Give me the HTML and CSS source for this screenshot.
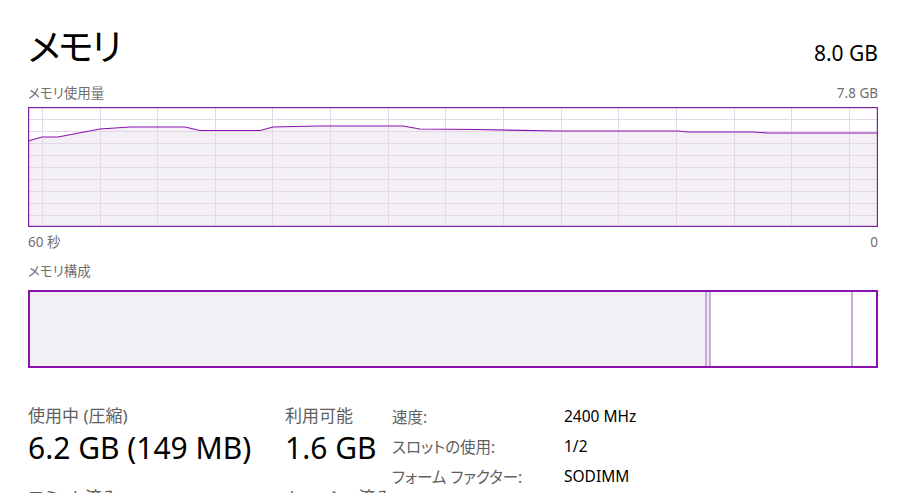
FILE: index.html
```html
<!DOCTYPE html>
<html lang="ja">
<head>
<meta charset="utf-8">
<title>メモリ</title>
<link rel="stylesheet" href="styles.css">
</head>
<body>
<div class="page">
  <div class="header">
    <h1 class="title">メモリ</h1>
    <div class="total">8.0 GB</div>
  </div>
  <div class="caption-row">
    <span>メモリ使用量</span>
    <span>7.8 GB</span>
  </div>
  <div class="graph">
    <svg width="850" height="120" viewBox="0 0 850 120">
      <polygon class="fill" points="0,34 14,30 30,30 72,22 102,20 157,20 172,23.5 232,23.5 245,20 290,19 375,19 392,22 450,22.5 530,24 650,24 660,25 725,25 740,26 850,26 850,120 0,120"/>
      <g class="grid">
        <line x1="0" y1="12.5" x2="850" y2="12.5"/>
        <line x1="0" y1="24.5" x2="850" y2="24.5"/>
        <line x1="0" y1="36.5" x2="850" y2="36.5"/>
        <line x1="0" y1="48.5" x2="850" y2="48.5"/>
        <line x1="0" y1="60.5" x2="850" y2="60.5"/>
        <line x1="0" y1="72.5" x2="850" y2="72.5"/>
        <line x1="0" y1="84.5" x2="850" y2="84.5"/>
        <line x1="0" y1="96.5" x2="850" y2="96.5"/>
        <line x1="0" y1="108.5" x2="850" y2="108.5"/>
        <line x1="14.5" y1="0" x2="14.5" y2="120"/>
        <line x1="72.5" y1="0" x2="72.5" y2="120"/>
        <line x1="129.5" y1="0" x2="129.5" y2="120"/>
        <line x1="187.5" y1="0" x2="187.5" y2="120"/>
        <line x1="244.5" y1="0" x2="244.5" y2="120"/>
        <line x1="302.5" y1="0" x2="302.5" y2="120"/>
        <line x1="360.5" y1="0" x2="360.5" y2="120"/>
        <line x1="417.5" y1="0" x2="417.5" y2="120"/>
        <line x1="475.5" y1="0" x2="475.5" y2="120"/>
        <line x1="533.5" y1="0" x2="533.5" y2="120"/>
        <line x1="590.5" y1="0" x2="590.5" y2="120"/>
        <line x1="648.5" y1="0" x2="648.5" y2="120"/>
        <line x1="706.5" y1="0" x2="706.5" y2="120"/>
        <line x1="763.5" y1="0" x2="763.5" y2="120"/>
        <line x1="821.5" y1="0" x2="821.5" y2="120"/>
      </g>
      <polyline class="line" points="0,34 14,30 30,30 72,22 102,20 157,20 172,23.5 232,23.5 245,20 290,19 375,19 392,22 450,22.5 530,24 650,24 660,25 725,25 740,26 850,26"/>
      <rect class="frame" x="0.5" y="0.5" width="849" height="119"/>
    </svg>
  </div>
  <div class="axis-row">
    <span>60 秒</span>
    <span>0</span>
  </div>
  <div class="caption-row comp-caption">
    <span>メモリ構成</span>
  </div>
  <div class="comp-bar">
    <div class="seg in-use"></div>
    <div class="seg modified"></div>
    <div class="seg standby"></div>
    <div class="seg free"></div>
  </div>
  <div class="stats">
    <div class="stat-col col-used">
      <div class="stat-label">使用中 (圧縮)</div>
      <div class="stat-value">6.2 GB (149 MB)</div>
      <div class="stat-label next">コミット済み</div>
    </div>
    <div class="stat-col col-avail">
      <div class="stat-label">利用可能</div>
      <div class="stat-value">1.6 GB</div>
      <div class="stat-label next">キャッシュ済み</div>
    </div>
    <div class="props">
      <div class="prop-label">速度:</div><div class="prop-value">2400 MHz</div>
      <div class="prop-label">スロットの使用:</div><div class="prop-value">1/2</div>
      <div class="prop-label">フォーム ファクター:</div><div class="prop-value">SODIMM</div>
      <div class="prop-label">ハードウェア予約済み:</div><div class="prop-value">185 MB</div>
    </div>
  </div>
</div>
</body>
</html>
```
FILE: styles.css
```css
html, body {
  margin: 0;
  padding: 0;
  background: #ffffff;
  overflow: hidden;
}
body {
  font-family: "Noto Sans", "Noto Sans CJK JP", sans-serif;
  color: #000000;
  font-feature-settings: "palt";
}
.page {
  width: 850px;
  height: 493px;
  padding: 14px 0 0 28px;
  box-sizing: content-box;
  overflow: hidden;
}
.header {
  display: flex;
  justify-content: space-between;
  align-items: baseline;
  height: 66px;
}
.title {
  margin: 0;
  font-weight: 400;
  font-size: 37px;
  line-height: 66px;
  letter-spacing: -2px;
}
.total {
  font-size: 21px;
  line-height: 66px;
}
.caption-row {
  display: flex;
  justify-content: space-between;
  font-size: 13.5px;
  line-height: 27px;
  height: 27px;
  color: #707070;
}
.graph {
  height: 120px;
  line-height: 0;
}
.graph svg {
  display: block;
}
.graph .fill {
  fill: #f3f0f5;
}
.graph .grid line {
  stroke: #e3d7e9;
  stroke-width: 1;
}
.graph .line {
  fill: none;
  stroke: #8b12ae;
  stroke-width: 1.2;
}
.graph .frame {
  fill: none;
  stroke: #7d1fa0;
  stroke-width: 1.4;
}
.axis-row {
  display: flex;
  justify-content: space-between;
  font-size: 13.5px;
  line-height: 30px;
  height: 30px;
  color: #707070;
}
.comp-caption {
  height: 33px;
  line-height: 28px;
}
.comp-bar {
  display: flex;
  width: 850px;
  height: 78px;
  box-sizing: border-box;
  border: 2px solid #8b12ae;
}
.seg {
  height: 100%;
}
.in-use {
  width: 675px;
  background: #f2f0f4;
}
.modified {
  width: 2px;
  background: #ede6f0;
  border-left: 2px solid #c9acd9;
  border-right: 2px solid #c9acd9;
}
.standby {
  width: 140px;
  background: #ffffff;
  border-right: 2px solid #c9acd9;
}
.free {
  flex: 1;
  background: #ffffff;
}
.stats {
  display: flex;
  margin-top: 36px;
}
.stat-col {
  display: flex;
  flex-direction: column;
}
.col-used {
  width: 257px;
}
.col-avail {
  width: 107px;
}
.stat-label {
  font-size: 17px;
  line-height: 24px;
  color: #606060;
}
.stat-value {
  font-size: 30px;
  line-height: 40px;
}
.stat-label.next {
  margin-top: 18px;
}
.props {
  display: grid;
  grid-template-columns: 172px auto;
  grid-auto-rows: 30px;
  align-items: center;
  margin-top: -3px;
}
.prop-label {
  font-size: 15.5px;
  color: #606060;
}
.prop-value {
  font-size: 15.5px;
  color: #000000;
}
```
